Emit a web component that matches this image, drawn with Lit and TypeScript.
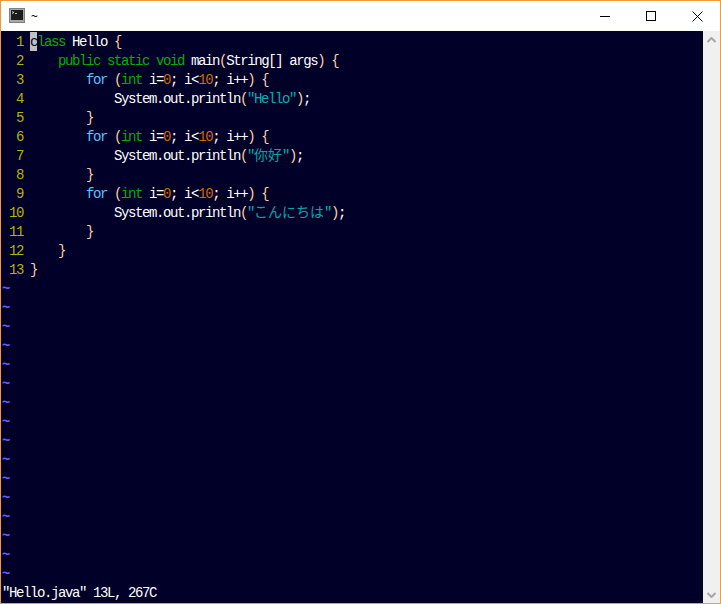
import { LitElement, html, css } from "lit";
import { customElement } from "lit/decorators.js";

type Seg = [string, string];
const k = (t: string): Seg => ["k", t];
const s = (t: string): Seg => ["s", t];
const c = (t: string): Seg => ["c", t];
const n = (t: string): Seg => ["n", t];
const p = (t: string): Seg => ["p", t];
const w = (t: string): Seg => ["w", t];

const forLine: Seg[] = [w("        "), c("for"), w(" "), p("("), k("int"), w(" i="), n("0"), w("; i<"), n("10"), w("; i++"), p(")"), w(" "), p("{")];
const printLine = (str: Seg[]): Seg[] => [w("            System.out.println"), p("("), ...str, p(")"), w(";")];

const LINES: Seg[][] = [
  [["cur", "c"], k("lass"), w(" Hello "), p("{")],
  [w("    "), k("public"), w(" "), k("static"), w(" "), k("void"), w(" main"), p("("), w("String[] args"), p(")"), w(" "), p("{")],
  forLine,
  printLine([s('"Hello"')]),
  [w("        "), p("}")],
  forLine,
  printLine([s('"'), ["j", "你好"], s('"')]),
  [w("        "), p("}")],
  forLine,
  printLine([s('"'), ["j", "こんにちは"], s('"')]),
  [w("        "), p("}")],
  [w("    "), p("}")],
  [p("}")],
];

@customElement("app-root")
export class AppRoot extends LitElement {
  static styles = css`
    :host { display: block; width: 721px; height: 604px; }
    .win { box-sizing: border-box; width: 721px; height: 604px; border: 1px solid #f09a3c; display: flex; flex-direction: column; background: #fff; overflow: hidden; }
    .title { height: 30px; flex: none; display: flex; align-items: center; background: #fff; }
    .appicon { margin-left: 8px; width: 17px; height: 16px; flex: none; }
    .tname { margin-left: 5px; font: 12px "Noto Sans", sans-serif; color: #000; flex: 1; }
    .btn { width: 46px; height: 30px; display: flex; align-items: center; justify-content: center; }
    .body { flex: 1; display: flex; min-height: 0; }
    .term { width: 702px; background: #000028; padding: 1px 0 0 1px; box-sizing: border-box; font: 14px/21px "Liberation Mono", monospace; letter-spacing: -1.4px; color: #fff; overflow: hidden; }
    .row { height: 19px; display: flex; white-space: pre; }
    .num { width: 21px; text-align: right; padding-right: 7px; color: #b4b400; }
    .k { color: #00b000; }
    .s { color: #00b0b0; }
    .c { color: #60c0ff; }
    .n { color: #d06800; }
    .p { color: #ffd0a8; }
    .w { color: #fff; }
    .cur { background: #c0c0c0; color: #000028; display: inline-block; width: 7px; height: 19px; }
    .j { color: #00a8a8; font: 14px/0 "Noto Sans CJK JP", sans-serif; letter-spacing: 0; }
    .tilde { color: #6060ff; font-weight: bold; }
    .status { color: #fff; }
    .bar { width: 17px; flex: none; background: #f0f0f0; display: flex; flex-direction: column; justify-content: space-between; align-items: center; }
    .arrow { height: 17px; display: flex; align-items: center; justify-content: center; }
  `;
  render() {
    const tildes = Array.from({ length: 16 });
    return html`<div class="win">
      <div class="title">
        <svg class="appicon" viewBox="0 0 17 16">
          <rect x="0" y="0" width="16" height="15" fill="#a8a8a8"/>
          <rect x="0.5" y="0.5" width="15" height="14" fill="none" stroke="#808080"/>
          <rect x="2" y="2" width="12" height="10" fill="#1c1c1c"/>
          <path d="M3 3.5l2 1-2 1M6 5.5h2" stroke="#e8e8e8" fill="none" stroke-width="0.8"/>
        </svg>
        <span class="tname">~</span>
        <div class="btn"><svg width="10" height="10"><path d="M0 5.5h10" stroke="#000"/></svg></div>
        <div class="btn"><svg width="10" height="10"><rect x="0.5" y="0.5" width="9" height="9" fill="none" stroke="#000"/></svg></div>
        <div class="btn"><svg width="11" height="11"><path d="M0.5 0.5l10 10M10.5 0.5l-10 10" stroke="#000" fill="none"/></svg></div>
      </div>
      <div class="body">
        <div class="term">
          ${LINES.map((l, i) => html`<div class="row"><span class="num">${String(i + 1).padStart(3, " ")}</span><span>${l.map(([cl, t]) => html`<span class=${cl}>${t}</span>`)}</span></div>`)}
          ${tildes.map(() => html`<div class="row tilde">~</div>`)}
          <div class="row status">"Hello.java" 13L, 267C</div>
        </div>
        <div class="bar">
          <div class="arrow"><svg width="9" height="6"><path d="M0.5 5L4.5 1L8.5 5" stroke="#a6a6a6" stroke-width="2" fill="none"/></svg></div>
          <div class="arrow"><svg width="9" height="6"><path d="M0.5 1L4.5 5L8.5 1" stroke="#a6a6a6" stroke-width="2" fill="none"/></svg></div>
        </div>
      </div>
    </div>`;
  }
}
